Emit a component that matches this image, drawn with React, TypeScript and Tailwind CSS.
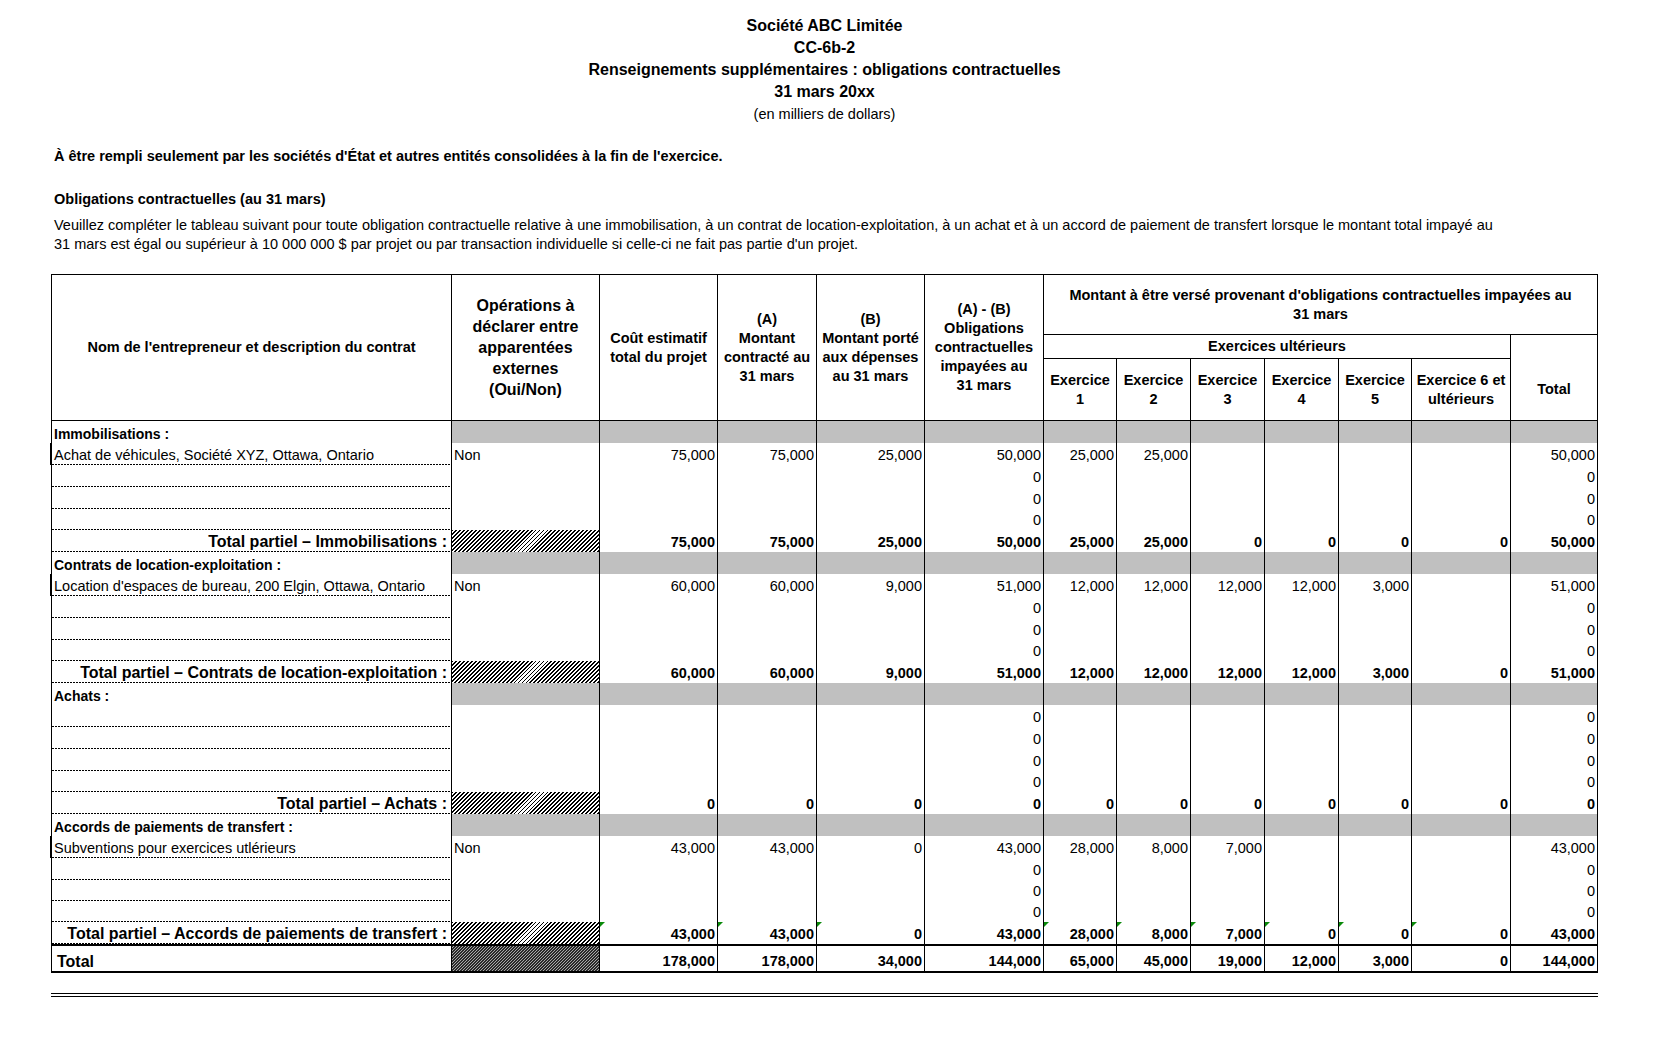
import React from "react";

const GRID =
  "grid grid-cols-[400px_148px_118px_99px_108px_119px_73px_74px_74px_74px_73px_99px_86px]";

const HATCH =
  "bg-[repeating-linear-gradient(135deg,#000_0px,#000_1.3px,#fff_1.3px,#fff_2.8px)]";
const HATCH_DARK =
  "bg-[repeating-linear-gradient(135deg,#2a2a2a_0px,#2a2a2a_0.8px,#a8a8a8_0.8px,#a8a8a8_2.12px)]";
const DOTS =
  "bg-[linear-gradient(to_right,#000_2px,transparent_2px)] bg-[length:3px_1px] bg-bottom bg-repeat-x";

type Kind = "section" | "data" | "sub";
interface Row {
  kind: Kind;
  label?: string;
  op?: string;
  nums?: string[];
  thick?: boolean;
  tri?: number[];
  h: string;
}

const Z = ["", "", "", "0", "", "", "", "", "", "", "0"];

function section(
  label: string,
  sub: string,
  first: { text: string; op: string; nums: string[] } | null,
  subNums: string[],
  heights: string[],
  tri: number[] = []
): Row[] {
  return [
    { kind: "section", label, h: heights[0] },
    {
      kind: "data",
      label: first ? first.text : "",
      op: first ? first.op : "",
      nums: first ? first.nums : Z,
      thick: !!first,
      h: heights[1],
    },
    { kind: "data", label: "", nums: Z, h: heights[2] },
    { kind: "data", label: "", nums: Z, h: heights[3] },
    { kind: "data", label: "", nums: Z, h: heights[4] },
    { kind: "sub", label: sub, nums: subNums, tri, h: heights[5] },
  ];
}

const H1 = ["h-[22px]", "h-[22px]", "h-[22px]", "h-[22px]", "h-[21px]", "h-[22px]"];
const H2 = ["h-[22px]", "h-[22px]", "h-[22px]", "h-[21px]", "h-[21px]", "h-[22px]"];

const ROWS: Row[] = [
  ...section(
    "Immobilisations :",
    "Total partiel – Immobilisations :",
    {
      text: "Achat de véhicules, Société XYZ, Ottawa, Ontario",
      op: "Non",
      nums: ["75,000", "75,000", "25,000", "50,000", "25,000", "25,000", "", "", "", "", "50,000"],
    },
    ["75,000", "75,000", "25,000", "50,000", "25,000", "25,000", "0", "0", "0", "0", "50,000"],
    H1
  ),
  ...section(
    "Contrats de location-exploitation :",
    "Total partiel – Contrats de location-exploitation :",
    {
      text: "Location d'espaces de bureau, 200 Elgin, Ottawa, Ontario",
      op: "Non",
      nums: ["60,000", "60,000", "9,000", "51,000", "12,000", "12,000", "12,000", "12,000", "3,000", "", "51,000"],
    },
    ["60,000", "60,000", "9,000", "51,000", "12,000", "12,000", "12,000", "12,000", "3,000", "0", "51,000"],
    H1
  ),
  ...section(
    "Achats :",
    "Total partiel – Achats :",
    null,
    ["0", "0", "0", "0", "0", "0", "0", "0", "0", "0", "0"],
    H1
  ),
  ...section(
    "Accords de paiements de transfert :",
    "Total partiel – Accords de paiements de transfert :",
    {
      text: "Subventions pour exercices utlérieurs",
      op: "Non",
      nums: ["43,000", "43,000", "0", "43,000", "28,000", "8,000", "7,000", "", "", "", "43,000"],
    },
    ["43,000", "43,000", "0", "43,000", "28,000", "8,000", "7,000", "0", "0", "0", "43,000"],
    H2,
    [0, 1, 2, 4, 5, 6, 7, 8, 9]
  ),
];

const TOTAL = ["178,000", "178,000", "34,000", "144,000", "65,000", "45,000", "19,000", "12,000", "3,000", "0", "144,000"];

function NumCell({ v, bold, last, tri }: { v: string; bold?: boolean; last?: boolean; tri?: boolean }) {
  return (
    <div
      className={`relative flex items-end justify-end pr-[2px] pb-[1px] text-[14.5px] leading-[17px] whitespace-nowrap ${
        bold ? "font-bold" : ""
      } ${last ? "" : "border-r border-black"}`}
    >
      {tri && (
        <span className="absolute left-0 top-0 h-0 w-0 border-t-[5px] border-r-[5px] border-t-[#0a8a0a] border-r-transparent" />
      )}
      {v}
    </div>
  );
}

function BodyRow({ r }: { r: Row }) {
  if (r.kind === "section") {
    return (
      <div className={`${GRID} ${r.h}`}>
        <div className="flex items-end border-r border-black pl-[2px] pb-[1px] text-[14px] font-bold leading-[16px] whitespace-nowrap">
          {r.label}
        </div>
        {Array.from({ length: 12 }).map((_, i) => (
          <div key={i} className={`bg-[#c0c0c0] ${i < 11 ? "border-r border-black" : ""}`} />
        ))}
      </div>
    );
  }
  const sub = r.kind === "sub";
  return (
    <div className={`${GRID} ${r.h}`}>
      <div className="relative border-r border-black">
        {r.thick && <span className="absolute -left-[2px] top-0 bottom-0 w-[2px] bg-black" />}
        <div
          className={`flex h-full items-end pb-[1px] whitespace-nowrap ${DOTS} ${
            sub
              ? "justify-end pr-[4px] text-[16px] font-bold leading-[18px]"
              : "pl-[2px] text-[14.5px] leading-[17px]"
          }`}
        >
          {r.label}
        </div>
      </div>
      {sub ? (
        <div className={`border-r border-black ${HATCH}`} />
      ) : (
        <div className="flex items-end border-r border-black pl-[2px] pb-[1px] text-[14.5px] leading-[17px]">
          {r.op}
        </div>
      )}
      {(r.nums || []).map((v, i) => (
        <NumCell key={i} v={v} bold={sub} last={i === 10} tri={(r.tri || []).includes(i)} />
      ))}
    </div>
  );
}

export default function App() {
  const hc = "flex items-center justify-center border-r border-black";
  return (
    <div className="min-h-[1039px] w-[1662px] bg-white pt-[15px] font-['Liberation_Sans',Arial,sans-serif] text-black">
      <div className="ml-[51px] w-[1547px] text-center">
        <div className="text-[16px] font-bold leading-[22px]">Société ABC Limitée</div>
        <div className="text-[16px] font-bold leading-[22px]">CC-6b-2</div>
        <div className="text-[16px] font-bold leading-[22px]">
          Renseignements supplémentaires : obligations contractuelles
        </div>
        <div className="text-[16px] font-bold leading-[22px]">31 mars 20xx</div>
        <div className="text-[14.5px] leading-[22px]">(en milliers de dollars)</div>
      </div>

      <div className="ml-[51px] w-[1547px] pl-[3px]">
        <div className="mt-[20px] text-[14.5px] font-bold leading-[22px]">
          À être rempli seulement par les sociétés d'État et autres entités consolidées à la fin de l'exercice.
        </div>
        <div className="mt-[21px] text-[14.5px] font-bold leading-[22px]">
          Obligations contractuelles (au 31 mars)
        </div>
        <div className="mt-[6px] text-[14.5px] leading-[19px] whitespace-nowrap">
          Veuillez compléter le tableau suivant pour toute obligation contractuelle relative à une immobilisation, à un
          contrat de location-exploitation, à un achat et à un accord de paiement de transfert lorsque le montant total
          impayé au
          <br />
          31 mars est égal ou supérieur à 10 000 000 $ par projet ou par transaction individuelle si celle-ci ne fait pas
          partie d'un projet.
        </div>
      </div>

      <div className="mt-[20px] ml-[51px] w-[1547px] border border-b-2 border-black">
        <div className="border-b border-black">
          <div className={`${GRID} grid-rows-[60px_24px_61px] text-center text-[14.5px] font-bold leading-[19px]`}>
            <div className={`row-span-3 ${hc}`}>Nom de l'entrepreneur et description du contrat</div>
            <div className={`row-span-3 ${hc} text-[16px] leading-[21px]`}>
              Opérations à
              <br />
              déclarer entre
              <br />
              apparentées
              <br />
              externes
              <br />
              (Oui/Non)
            </div>
            <div className={`row-span-3 ${hc}`}>
              Coût estimatif
              <br />
              total du projet
            </div>
            <div className={`row-span-3 ${hc}`}>
              (A)
              <br />
              Montant
              <br />
              contracté au
              <br />
              31 mars
            </div>
            <div className={`row-span-3 ${hc}`}>
              (B)
              <br />
              Montant porté
              <br />
              aux dépenses
              <br />
              au 31 mars
            </div>
            <div className={`row-span-3 ${hc}`}>
              (A) - (B)
              <br />
              Obligations
              <br />
              contractuelles
              <br />
              impayées au
              <br />
              31 mars
            </div>
            <div className="col-span-7 flex items-center justify-center border-b border-black">
              Montant à être versé provenant d'obligations contractuelles impayées au
              <br />
              31 mars
            </div>
            <div className="col-span-6 flex items-center justify-center border-b border-r border-black">
              Exercices ultérieurs
            </div>
            <div className="row-span-2 flex items-center justify-center pt-[24px]">Total</div>
            <div className={hc}>
              Exercice
              <br />1
            </div>
            <div className={hc}>
              Exercice
              <br />2
            </div>
            <div className={hc}>
              Exercice
              <br />3
            </div>
            <div className={hc}>
              Exercice
              <br />4
            </div>
            <div className={hc}>
              Exercice
              <br />5
            </div>
            <div className={hc}>
              Exercice 6 et
              <br />
              ultérieurs
            </div>
          </div>
        </div>

        {ROWS.map((r, i) => (
          <BodyRow key={i} r={r} />
        ))}

        <div className={`${GRID} h-[27px] border-t-2 border-black`}>
          <div className="flex items-end border-r border-black pl-[5px] text-[16px] font-bold leading-[18px]">
            Total
          </div>
          <div className={`border-r border-black ${HATCH_DARK}`} />
          {TOTAL.map((v, i) => (
            <NumCell key={i} v={v} bold last={i === 10} />
          ))}
        </div>
      </div>

      <div className="mt-[20px] ml-[51px] h-[4px] w-[1547px] border-y border-black" />
    </div>
  );
}
